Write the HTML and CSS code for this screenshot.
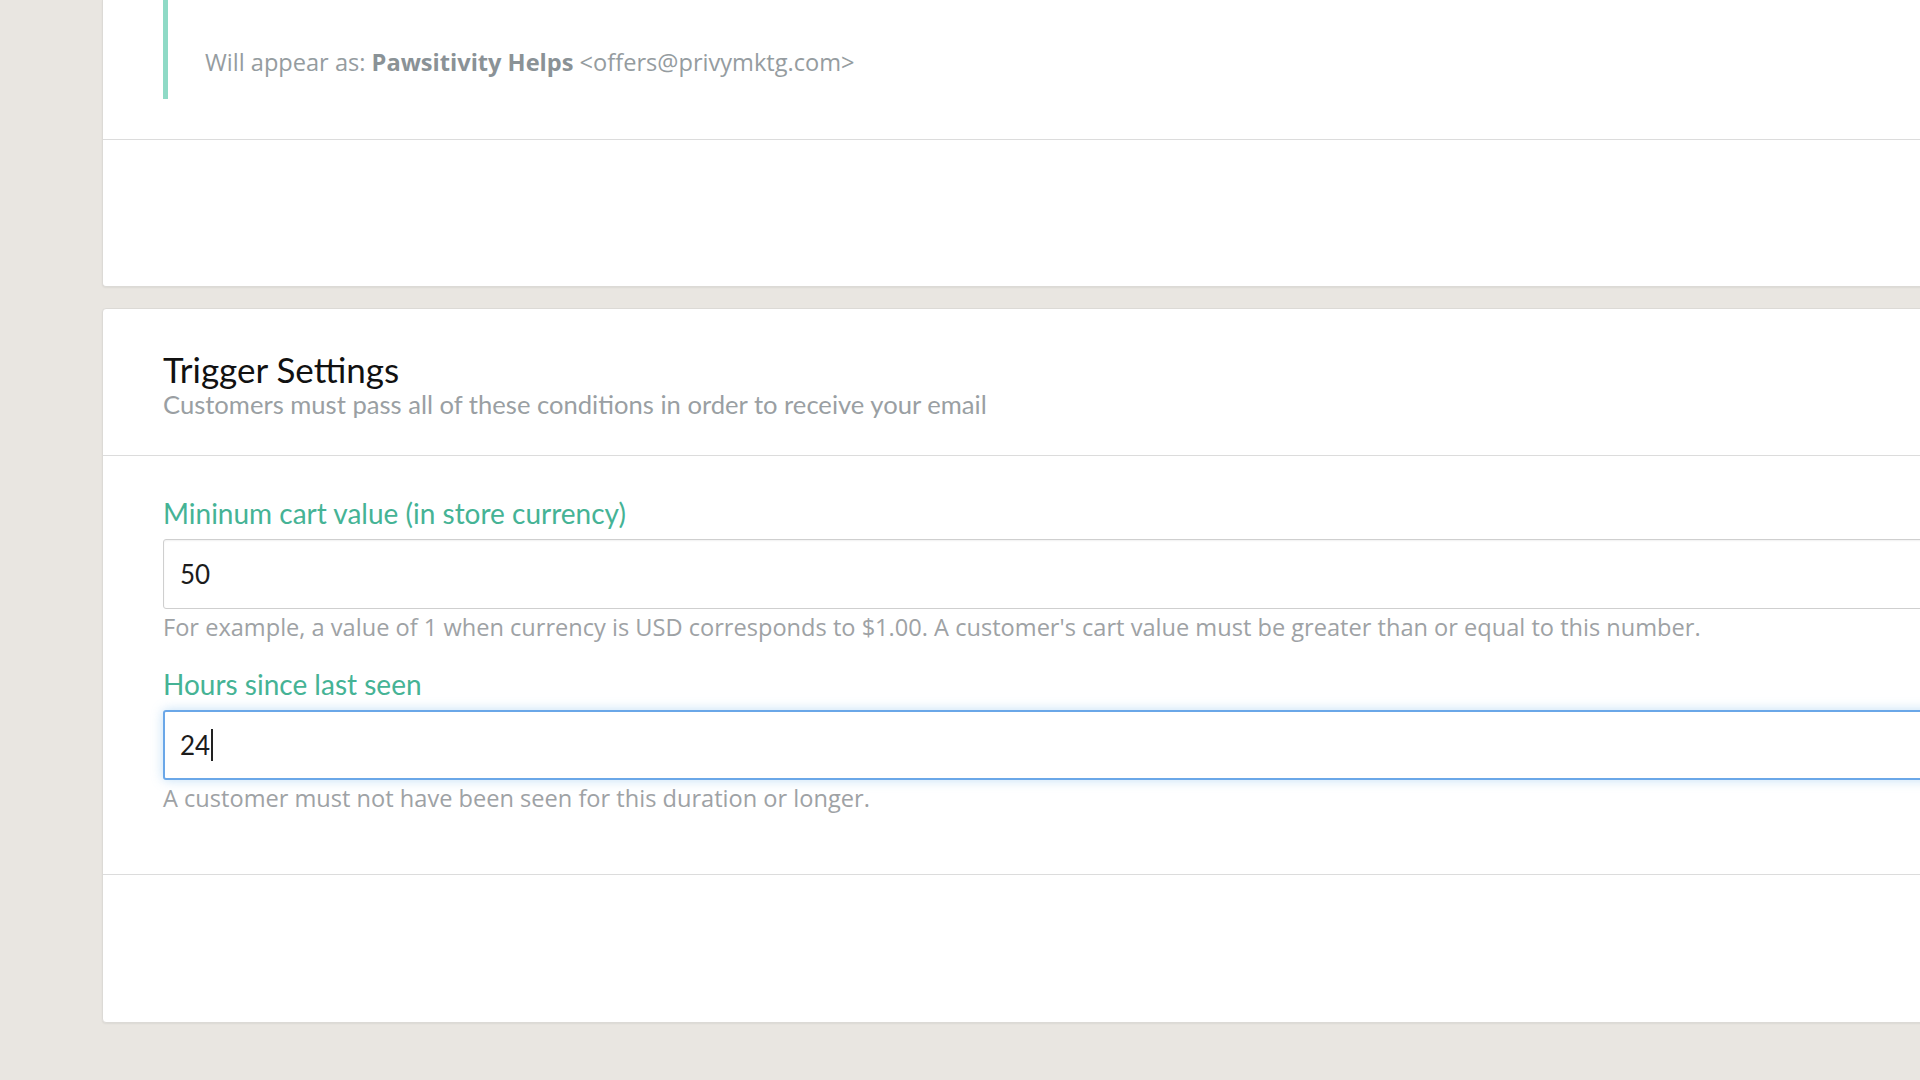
FILE: index.html
```html
<!DOCTYPE html>
<html>
<head>
<meta charset="utf-8">
<link rel="stylesheet" href="styles.css">
</head>
<body>
<div class="page">
  <section class="card card-top">
    <div class="sender">
      <blockquote class="sender-quote">
        Will appear as: <strong>Pawsitivity Helps</strong> &lt;offers@privymktg.com&gt;
      </blockquote>
    </div>
    <div class="card-footer card-footer-top"></div>
  </section>

  <section class="card card-trigger">
    <header class="card-header">
      <h2 class="card-title">Trigger Settings</h2>
      <p class="card-subtitle">Customers must pass all of these conditions in order to receive your email</p>
    </header>
    <div class="card-body">
      <div class="field">
        <label class="field-label">Mininum cart value (in store currency)</label>
        <div class="field-input">50</div>
        <p class="field-help">For example, a value of 1 when currency is USD corresponds to $1.00. A customer's cart value must be greater than or equal to this number.</p>
      </div>
      <div class="field field-second">
        <label class="field-label">Hours since last seen</label>
        <div class="field-input field-input-focus">24<span class="caret"></span></div>
        <p class="field-help">A customer must not have been seen for this duration or longer.</p>
      </div>
    </div>
    <div class="card-footer card-footer-bottom"></div>
  </section>
</div>
</body>
</html>
```

FILE: styles.css
```css
html, body {
  margin: 0;
  padding: 0;
  height: 100%;
  overflow: hidden;
  background: #e9e6e1;
}

.page {
  padding-left: 102px;
  width: 1900px;
}

.card {
  background: #ffffff;
  border: 1px solid #dcdad6;
  border-radius: 4px;
  box-shadow: 0 1px 2px rgba(0, 0, 0, 0.06);
}

.card-top {
  border-top: none;
  border-radius: 0 0 4px 4px;
}

.sender {
  padding-left: 60px;
  height: 140px;
  border-bottom: 1px solid #dcdcdc;
  box-sizing: border-box;
}

.sender-quote {
  margin: 0;
  height: 99px;
  box-sizing: border-box;
  border-left: 5px solid #8fdac6;
  padding: 46px 0 0 37px;
  font-family: "Open Sans", "Liberation Sans", sans-serif;
  font-size: 23.6px;
  line-height: 32px;
  color: #959ca0;
}

.sender-quote strong {
  font-weight: 700;
  color: #8a9296;
}

.card-footer-top {
  height: 146px;
}

.card-trigger {
  margin-top: 21px;
}

.card-header {
  padding: 40px 0 36px 60px;
  border-bottom: 1px solid #dcdcdc;
}

.card-title {
  margin: 0;
  font-family: Lato, "Open Sans", sans-serif;
  font-weight: 400;
  font-size: 35px;
  line-height: 40px;
  color: #111111;
}

.card-subtitle {
  margin: 0;
  font-family: Lato, "Open Sans", sans-serif;
  font-size: 25.6px;
  line-height: 30px;
  color: #9a9fa3;
}

.card-body {
  padding: 41px 0 61px 60px;
  border-bottom: 1px solid #dcdcdc;
}

.field-second {
  margin-top: 26px;
}

.field-label {
  display: block;
  font-family: Lato, "Open Sans", sans-serif;
  font-size: 28px;
  line-height: 32px;
  color: #45b395;
}

.field-input {
  margin-top: 10px;
  height: 70px;
  box-sizing: border-box;
  border: 1px solid #cfcfcf;
  border-radius: 3px;
  padding: 0 16px;
  display: flex;
  align-items: center;
  font-family: Lato, "Open Sans", sans-serif;
  font-size: 26px;
  color: #1c1c1c;
  box-shadow: inset 0 1px 2px rgba(0, 0, 0, 0.06);
}

.field-input-focus {
  border: 2px solid #6aa7e8;
  padding-left: 15px;
  box-shadow: 0 0 12px rgba(102, 175, 233, 0.4);
}

.caret {
  display: inline-block;
  width: 2px;
  height: 32px;
  background: #222;
  margin-left: 1px;
}

.field-help {
  margin: 3px 0 0;
  font-family: "Open Sans", "Liberation Sans", sans-serif;
  font-size: 23.6px;
  line-height: 30px;
  color: #9ea2a5;
}

.card-footer-bottom {
  height: 147px;
}
```
